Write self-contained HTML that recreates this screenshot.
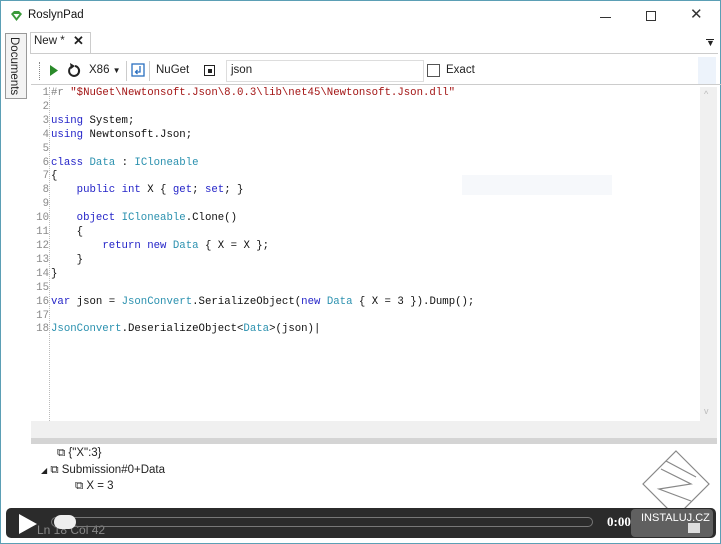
<!DOCTYPE html>
<html><head><meta charset="utf-8"><style>
*{margin:0;padding:0;box-sizing:border-box}
body{width:721px;height:544px;overflow:hidden;background:#fff;font-family:"Liberation Sans",sans-serif;position:relative}
.win{position:absolute;left:0;top:0;width:721px;height:544px;border:1px solid #5b9fb5;background:#fff}
.abs{position:absolute}
.code{position:absolute;left:32px;top:86px;font-family:"Liberation Mono",monospace;font-size:10.7px;line-height:13.9px;white-space:pre;color:#111}
.ln{color:#8a8a8a;display:inline-block;width:16px;text-align:right;margin-right:2px}
.k{color:#2424c8}.t{color:#2b91af}.s{color:#a31515}.p{color:#808080}
</style></head><body><div class="win">
<svg class="abs" style="left:9px;top:9px" width="13" height="12" viewBox="0 0 13 12"><path d="M1 4 L4 1 H9 L12 4 L6.5 11 Z" fill="#3a9a3a"/><path d="M3.5 4 H9.5 L6.5 8Z" fill="#fff"/></svg>
<div class="abs" style="left:27px;top:8px;font-size:11.5px;color:#111">RoslynPad</div>
<div class="abs" style="left:599px;top:16px;width:11px;height:1px;background:#333"></div>
<div class="abs" style="left:645px;top:10px;width:10px;height:10px;border:1px solid #333"></div>
<div class="abs" style="left:689px;top:4px;font-size:15px;color:#333">✕</div>
<div class="abs" style="left:4px;top:32px;width:22px;height:66px;border:1px solid #999;background:#f3f3f3"></div>
<div class="abs" style="left:7px;top:36px;writing-mode:vertical-rl;font-size:11.5px;color:#222">Documents</div>
<div class="abs" style="left:29px;top:31px;width:61px;height:22px;border:1px solid #ccc;border-bottom:none;background:#fff"></div>
<div class="abs" style="left:33px;top:34px;font-size:11.5px;color:#222">New *</div>
<div class="abs" style="left:72px;top:32px;font-size:13px;font-weight:bold;color:#222">✕</div>
<div class="abs" style="left:30px;top:52px;width:687px;height:1px;background:#ccc"></div>
<div class="abs" style="left:705px;top:37px;font-size:9px;color:#222">▼</div>
<div class="abs" style="left:705px;top:38px;width:8px;height:1px;background:#222"></div>
<div class="abs" style="left:38px;top:61px;width:1px;height:18px;border-left:1px dotted #888"></div>
<svg class="abs" style="left:48px;top:63px" width="10" height="13"><path d="M1 1 L9 6.5 L1 12Z" fill="#2a8a2a"/></svg>
<svg class="abs" style="left:66px;top:61px" width="15" height="16" viewBox="0 0 15 16"><path d="M4 5 A5 5 0 1 0 8 4" fill="none" stroke="#222" stroke-width="2"/><path d="M3 1 L8 4 L4 7Z" fill="#222"/></svg>
<div class="abs" style="left:88px;top:63px;font-size:11.5px;color:#222">X86 <span style="font-size:8px">▼</span></div>
<div class="abs" style="left:125px;top:60px;width:1px;height:20px;background:#ccc"></div>
<svg class="abs" style="left:130px;top:62px" width="14" height="14"><rect x="1" y="1" width="12" height="12" fill="none" stroke="#2a6fc0" stroke-width="1.3"/><path d="M9 3 V9 H5 M6.5 7 L4.5 9 L6.5 11" fill="none" stroke="#2a6fc0" stroke-width="1.3"/></svg>
<div class="abs" style="left:148px;top:60px;width:1px;height:20px;background:#ccc"></div>
<div class="abs" style="left:155px;top:63px;font-size:11.5px;color:#222">NuGet</div>
<div class="abs" style="left:203px;top:64px;width:11px;height:11px;border:1.5px solid #222"></div>
<div class="abs" style="left:207px;top:68px;width:4px;height:4px;background:#222"></div>
<div class="abs" style="left:225px;top:59px;width:198px;height:22px;border:1px solid #ddd"></div>
<div class="abs" style="left:230px;top:63px;font-size:11.5px;color:#222">json</div>
<div class="abs" style="left:426px;top:63px;width:13px;height:13px;border:1px solid #555"></div>
<div class="abs" style="left:445px;top:63px;font-size:11.5px;color:#222">Exact</div>
<div class="abs" style="left:30px;top:83px;width:694px;height:1px;background:#ccc"></div>
<div class="abs" style="left:697px;top:56px;width:18px;height:27px;background:#edf3fb"></div>
<div class="abs" style="left:48px;top:86px;width:1px;height:334px;border-left:1px dotted #bbb"></div>
<div class="abs" style="left:699px;top:86px;width:17px;height:334px;background:#f0f0f0"></div>
<div class="abs" style="left:703px;top:88px;font-size:9px;color:#bbb">^</div>
<div class="abs" style="left:703px;top:405px;font-size:9px;color:#bbb">v</div>
<div class="abs" style="left:30px;top:420px;width:686px;height:17px;background:#f0f0f0"></div>
<div class="abs" style="left:461px;top:174px;width:150px;height:20px;background:#f6f8fb"></div>
<div class="code"><span class="ln">1</span><span class="p">#r</span> <span class="s">"$NuGet\Newtonsoft.Json\8.0.3\lib\net45\Newtonsoft.Json.dll"</span>
<span class="ln">2</span>
<span class="ln">3</span><span class="k">using</span> System;
<span class="ln">4</span><span class="k">using</span> Newtonsoft.Json;
<span class="ln">5</span>
<span class="ln">6</span><span class="k">class</span> <span class="t">Data</span> : <span class="t">ICloneable</span>
<span class="ln">7</span>{
<span class="ln">8</span>    <span class="k">public</span> <span class="k">int</span> X { <span class="k">get</span>; <span class="k">set</span>; }
<span class="ln">9</span>
<span class="ln">10</span>    <span class="k">object</span> <span class="t">ICloneable</span>.Clone()
<span class="ln">11</span>    {
<span class="ln">12</span>        <span class="k">return</span> <span class="k">new</span> <span class="t">Data</span> { X = X };
<span class="ln">13</span>    }
<span class="ln">14</span>}
<span class="ln">15</span>
<span class="ln">16</span><span class="k">var</span> json = <span class="t">JsonConvert</span>.SerializeObject(<span class="k">new</span> <span class="t">Data</span> { X = 3 }).Dump();
<span class="ln">17</span>
<span class="ln">18</span><span class="t">JsonConvert</span>.DeserializeObject&lt;<span class="t">Data</span>&gt;(json)|</div>
<div class="abs" style="left:30px;top:437px;width:686px;height:6px;background:#d4d4d4"></div>
<div class="abs" style="left:56px;top:446px;font-size:11.5px;color:#222">⧉ {"X":3}</div>
<div class="abs" style="left:40px;top:463px;font-size:11.5px;color:#222"><span style="font-size:8px">◢</span> ⧉ Submission#0+Data</div>
<div class="abs" style="left:74px;top:479px;font-size:11.5px;color:#222">⧉ X = 3</div>
<svg class="abs" style="left:640px;top:448px" width="70" height="70" viewBox="0 0 70 70"><g fill="none" stroke="#888" stroke-width="1.2"><path d="M35 2 L68 35 L35 68 L2 35Z"/><path d="M20 20 L50 35 L18 40 L50 52 M25 12 L55 28"/></g></svg>
<div class="abs" style="left:5px;top:507px;width:710px;height:30px;background:#2b2b2b;border-radius:5px"></div>
<svg class="abs" style="left:16px;top:512px" width="22" height="22"><path d="M2 1 L20 11 L2 21Z" fill="#fff"/></svg>
<div class="abs" style="left:36px;top:522px;font-size:12px;color:#888">Ln 18 Col 42</div>
<div class="abs" style="left:50px;top:516px;width:542px;height:10px;border:1px solid #777;border-radius:5px"></div>
<div class="abs" style="left:53px;top:514px;width:22px;height:14px;background:#eee;border-radius:7px"></div>
<div class="abs" style="left:606px;top:513px;font-size:13px;font-weight:bold;color:#fff;font-family:'Liberation Serif',serif">0:00</div>
<div class="abs" style="left:630px;top:508px;width:82px;height:28px;background:#6a6a6a;border-radius:4px;opacity:.85"></div>
<div class="abs" style="left:640px;top:511px;font-size:11px;color:#fff">INSTALUJ.CZ</div>
<div class="abs" style="left:687px;top:522px;width:12px;height:10px;background:#ddd"></div>
</div></body></html>
